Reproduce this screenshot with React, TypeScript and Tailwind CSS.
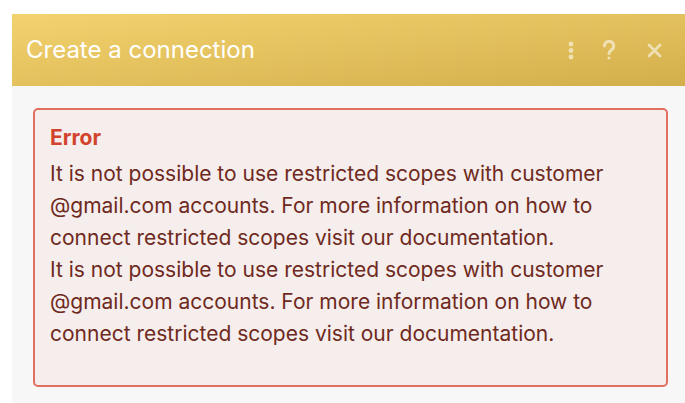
import React from 'react';

const message =
  'It is not possible to use restricted scopes with customer @gmail.com accounts. For more information on how to connect restricted scopes visit our documentation.';

const DotsIcon = () => (
  <svg width="6" height="19" viewBox="0 0 6 19" fill="currentColor">
    <circle cx="3" cy="3" r="2.4" />
    <circle cx="3" cy="9.5" r="2.4" />
    <circle cx="3" cy="16" r="2.4" />
  </svg>
);

const HelpIcon = () => (
  <svg width="14" height="20" viewBox="0 0 14 20" fill="none" stroke="currentColor" strokeWidth="3" strokeLinecap="round">
    <path d="M2.5 6 A4.6 4.6 0 1 1 9.6 9.8 C8 10.9 7 11.8 7 13.4" />
    <circle cx="7" cy="18" r="1.6" fill="currentColor" stroke="none" />
  </svg>
);

const CloseIcon = () => (
  <svg width="15" height="15" viewBox="0 0 15 15" fill="none" stroke="currentColor" strokeWidth="2.8" strokeLinecap="round">
    <path d="M2 2 L13 13 M13 2 L2 13" />
  </svg>
);

const App: React.FC = () => {
  return (
    <div className="min-h-screen bg-white pt-[14px] pl-[12px]" style={{ fontFamily: 'Inter, "Noto Sans", sans-serif' }}>
      <div className="flex flex-col h-[389px]">
        <div className="flex items-center justify-between h-[72px] pl-[14px] pr-[23px] bg-gradient-to-br from-[#f3d36f] to-[#d3af4b]">
          <span className="text-white text-[24px] font-normal">Create a connection</span>
          <div className="flex items-center text-white/55">
            <DotsIcon />
            <span className="ml-[28px]"><HelpIcon /></span>
            <span className="ml-[31px]"><CloseIcon /></span>
          </div>
        </div>
        <div className="flex-1 bg-[#f7f7f7] pl-[21px] pr-[17px] pt-[22px] pb-[16px]">
          <div className="h-full rounded-[5px] border-2 border-[#e2705f] bg-[#f6eded] pl-[15px] pr-[12px] pt-[15px]">
            <div className="text-[#d2432b] text-[21px] font-bold leading-[26px]">Error</div>
            <p className="mt-[7px] text-[#6e2a20] text-[21px] leading-[32px]">
              {message}
              <br />
              {message}
            </p>
          </div>
        </div>
      </div>
    </div>
  );
};

export default App;
